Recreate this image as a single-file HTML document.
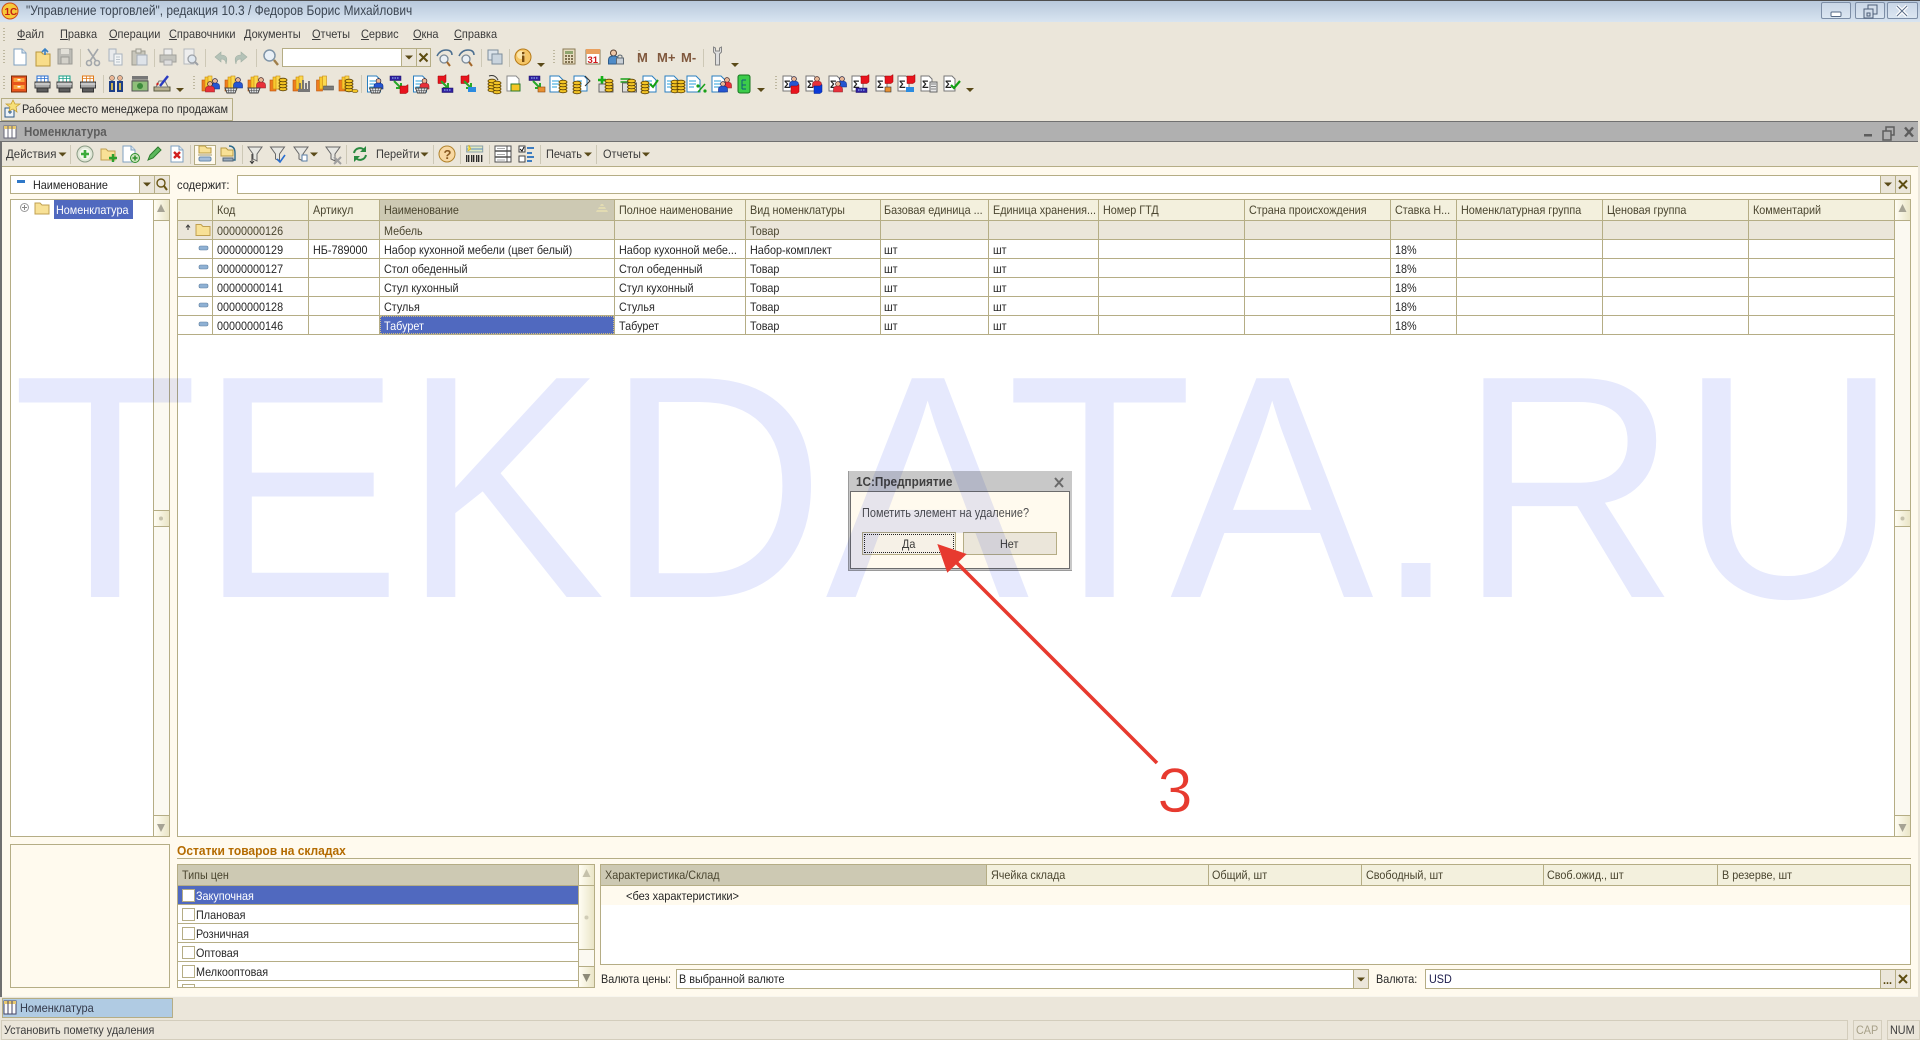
<!DOCTYPE html>
<html lang="ru"><head><meta charset="utf-8"><title>Номенклатура</title>
<style>
html,body{margin:0;padding:0;background:#ebe6da}
#p{position:relative;width:1920px;height:1040px;overflow:hidden;background:#ebe6da;font-family:"Liberation Sans","Noto Sans CJK SC",sans-serif}
#p div{position:absolute;box-sizing:border-box}
.t{white-space:nowrap;font-size:12px;line-height:19px;height:19px;color:#262626;transform:scaleX(.9);transform-origin:0 0;margin-top:1px}
.m{color:#3a3a3a;line-height:20px;height:20px;transform:scaleX(.915);margin-top:0}
.h{color:#4a452f}
.v{background:#b5ad85;width:1px}
.l{background:#b5ad85;height:1px}
.s{background:#cdc8b6;width:1px}
.g{width:2px;background:repeating-linear-gradient(#bdb79f 0 1px,transparent 1px 3px)}
.f{background:#fff;border:1px solid #b5ad85}
.b{background:#ebe6da;border:1px solid #b5ad85}
.sb{background:#fbf9f1;border:1px solid #b5ad85}
.th{background:linear-gradient(90deg,#fffdf3,#eae5c7);border:1px solid #b5ad85}
u{text-decoration:underline}
svg{position:absolute;left:0;top:0}
</style></head><body><div id="p">

<!-- title bar -->
<div style="left:0;top:0;width:1920px;height:1px;background:#4d4d4d"></div>
<div style="left:0;top:1px;width:1920px;height:21px;background:linear-gradient(#b8c8db,#d8e4f0)"></div>
<div class="t" style="left:26px;top:0;margin-top:0;font-size:14px;line-height:21px;height:21px;color:#3c4652;transform:scaleX(.852)">"Управление торговлей", редакция 10.3 / Федоров Борис Михайлович</div>
<div style="left:1821px;top:2px;width:30px;height:17px;border:1px solid #7d8ea6;border-radius:2px;background:linear-gradient(#c9d6e6,#dbe6f1)"></div>
<div style="left:1855px;top:2px;width:30px;height:17px;border:1px solid #7d8ea6;border-radius:2px;background:linear-gradient(#c9d6e6,#dbe6f1)"></div>
<div style="left:1887px;top:2px;width:31px;height:17px;border:1px solid #7d8ea6;border-radius:2px;background:linear-gradient(#c9d6e6,#dbe6f1)"></div>

<!-- menu -->
<div class="g" style="left:3px;top:28px;height:13px"></div>
<div class="t m" style="left:17px;top:24px"><u>Ф</u>айл</div>
<div class="t m" style="left:60px;top:24px"><u>П</u>равка</div>
<div class="t m" style="left:109px;top:24px"><u>О</u>перации</div>
<div class="t m" style="left:168.5px;top:24px"><u>С</u>правочники</div>
<div class="t m" style="left:244px;top:24px"><u>Д</u>окументы</div>
<div class="t m" style="left:312px;top:24px"><u>О</u>тчеты</div>
<div class="t m" style="left:361px;top:24px"><u>С</u>ервис</div>
<div class="t m" style="left:412.5px;top:24px"><u>О</u>кна</div>
<div class="t m" style="left:453.5px;top:24px"><u>С</u>правка</div>

<!-- toolbar 1 -->
<div class="g" style="left:3px;top:50px;height:15px"></div>
<div class="s" style="left:80px;top:49px;height:18px"></div>
<div class="s" style="left:154px;top:49px;height:18px"></div>
<div class="s" style="left:205px;top:49px;height:18px"></div>
<div class="s" style="left:256px;top:49px;height:18px"></div>
<div class="s" style="left:481px;top:49px;height:18px"></div>
<div class="s" style="left:509px;top:49px;height:18px"></div>
<div class="g" style="left:553px;top:50px;height:15px"></div>
<div class="g" style="left:638px;top:50px;height:15px"></div>
<div class="s" style="left:703px;top:49px;height:18px"></div>
<div class="f" style="left:282px;top:48px;width:120px;height:19px"></div>
<div class="b" style="left:401px;top:48px;width:16px;height:19px"></div>
<div class="b" style="left:416px;top:48px;width:15px;height:19px"></div>

<!-- toolbar 2 -->
<div class="g" style="left:3px;top:76px;height:15px"></div>
<div class="s" style="left:103px;top:75px;height:18px"></div>
<div class="g" style="left:193px;top:76px;height:15px"></div>
<div class="s" style="left:361px;top:75px;height:18px"></div>
<div class="g" style="left:775px;top:76px;height:15px"></div>

<!-- work-place tab -->
<div style="left:1px;top:98px;width:232px;height:23px;background:#ebe6da;border:1px solid #b5ad85"></div>
<div class="t m" style="left:22px;top:99px;color:#2c2c2c;font-size:12.3px;transform:scaleX(.89)">Рабочее место менеджера по продажам</div>

<!-- panel -->
<div style="left:0;top:121px;width:1918px;height:876px;background:#fffaee"></div>
<div style="left:0;top:121px;width:2px;height:876px;background:#707070"></div>
<div style="left:0;top:121px;width:1918px;height:1px;background:#707070"></div>
<div style="left:0;top:122px;width:1918px;height:19px;background:#b0b0b0"></div>
<div style="left:0;top:141px;width:1918px;height:1px;background:#707070"></div>
<div style="left:2px;top:142px;width:1916px;height:24px;background:#ebe6da"></div>
<div class="l" style="left:2px;top:166px;width:1916px"></div>
<div style="left:2px;top:996px;width:1916px;height:1px;background:#f8f6ee"></div>
<div class="t" style="left:23.5px;top:122px;margin-top:0;font-size:13px;font-weight:bold;color:#5d5d5d;transform:scaleX(.89)">Номенклатура</div>

<!-- panel toolbar -->
<div class="t m" style="left:6px;top:144px;transform:scaleX(.96)">Действия</div>
<div class="t m" style="left:375.5px;top:144px">Перейти</div>
<div class="t m" style="left:546px;top:144px">Печать</div>
<div class="t m" style="left:602.5px;top:144px">Отчеты</div>
<div class="s" style="left:70px;top:145px;height:19px"></div>
<div class="s" style="left:190px;top:145px;height:19px"></div>
<div class="s" style="left:241.5px;top:145px;height:19px"></div>
<div class="s" style="left:346px;top:145px;height:19px"></div>
<div class="s" style="left:433px;top:145px;height:19px"></div>
<div class="s" style="left:460px;top:145px;height:19px"></div>
<div class="s" style="left:488.5px;top:145px;height:19px"></div>
<div class="s" style="left:540px;top:145px;height:19px"></div>
<div class="s" style="left:596px;top:145px;height:19px"></div>
<div style="left:194px;top:145px;width:22px;height:20px;background:#fffaee;border:1px solid #b5ad85"></div>

<!-- filter row -->
<div class="f" style="left:10px;top:175px;width:130px;height:19px"></div>
<div class="b" style="left:139px;top:175px;width:16px;height:19px"></div>
<div class="b" style="left:154px;top:175px;width:16px;height:19px"></div>
<div class="t" style="left:33px;top:175px">Наименование</div>
<div style="left:17px;top:180px;width:8px;height:3px;background:#2f78c8"></div>
<div class="t" style="left:176.5px;top:175px;transform:scaleX(.93)">содержит:</div>
<div class="f" style="left:236.5px;top:175px;width:1644px;height:19px"></div>
<div class="b" style="left:1880px;top:175px;width:16px;height:19px"></div>
<div class="b" style="left:1895px;top:175px;width:16px;height:19px"></div>

<!-- tree -->
<div style="left:10px;top:199px;width:160px;height:638px;background:#fff;border:1px solid #b5ad85"></div>
<div class="sb" style="left:153px;top:199px;width:17px;height:638px"></div>
<div class="th" style="left:153px;top:199px;width:17px;height:22px"></div>
<div class="th" style="left:153px;top:510px;width:17px;height:17px"></div>
<div class="th" style="left:153px;top:815px;width:17px;height:22px"></div>
<div style="left:54px;top:200px;width:79px;height:19px;background:#5069bf"></div>
<div class="t" style="left:56px;top:200px;color:#fff">Номенклатура</div>

<!-- main grid -->
<div style="left:177px;top:199px;width:1734px;height:638px;background:#fff;border:1px solid #b5ad85"></div>
<div style="left:178px;top:200px;width:1716px;height:20px;background:#f3f0dd"></div>
<div style="left:380px;top:200px;width:234px;height:20px;background:#cdc9b3"></div>
<div style="left:178px;top:221px;width:1716px;height:18px;background:#ebe6da"></div>
<div class="l" style="left:178px;top:220px;width:1716px"></div>
<div class="l" style="left:178px;top:239px;width:1716px"></div>
<div class="l" style="left:178px;top:258px;width:1716px"></div>
<div class="l" style="left:178px;top:277px;width:1716px"></div>
<div class="l" style="left:178px;top:296px;width:1716px"></div>
<div class="l" style="left:178px;top:315px;width:1716px"></div>
<div class="l" style="left:178px;top:334px;width:1716px"></div>
<div class="v" style="left:212px;top:200px;height:134px"></div>
<div class="v" style="left:308px;top:200px;height:134px"></div>
<div class="v" style="left:379px;top:200px;height:134px"></div>
<div class="v" style="left:614px;top:200px;height:134px"></div>
<div class="v" style="left:745px;top:200px;height:134px"></div>
<div class="v" style="left:880px;top:200px;height:134px"></div>
<div class="v" style="left:988px;top:200px;height:134px"></div>
<div class="v" style="left:1098px;top:200px;height:134px"></div>
<div class="v" style="left:1244px;top:200px;height:134px"></div>
<div class="v" style="left:1390px;top:200px;height:134px"></div>
<div class="v" style="left:1456px;top:200px;height:134px"></div>
<div class="v" style="left:1602px;top:200px;height:134px"></div>
<div class="v" style="left:1748px;top:200px;height:134px"></div>
<div class="sb" style="left:1894px;top:199px;width:17px;height:638px"></div>
<div class="th" style="left:1894px;top:199px;width:17px;height:22px"></div>
<div class="th" style="left:1894px;top:510px;width:17px;height:17px"></div>
<div class="th" style="left:1894px;top:815px;width:17px;height:22px"></div>
<div style="left:380px;top:316px;width:234px;height:18px;background:#5069bf;outline:1px dotted #c9b98a;outline-offset:-1px"></div>

<div class="t h" style="left:217px;top:200px">Код</div>
<div class="t h" style="left:312.5px;top:200px">Артикул</div>
<div class="t h" style="left:384px;top:200px">Наименование</div>
<div class="t h" style="left:619px;top:200px">Полное наименование</div>
<div class="t h" style="left:750px;top:200px">Вид номенклатуры</div>
<div class="t h" style="left:884px;top:200px">Базовая единица ...</div>
<div class="t h" style="left:993px;top:200px">Единица хранения...</div>
<div class="t h" style="left:1103px;top:200px">Номер ГТД</div>
<div class="t h" style="left:1248.5px;top:200px">Страна происхождения</div>
<div class="t h" style="left:1394.5px;top:200px">Ставка Н...</div>
<div class="t h" style="left:1460.5px;top:200px">Номенклатурная группа</div>
<div class="t h" style="left:1607px;top:200px">Ценовая группа</div>
<div class="t h" style="left:1753px;top:200px">Комментарий</div>

<div class="t h" style="left:217px;top:221px">00000000126</div>
<div class="t h" style="left:384px;top:221px">Мебель</div>
<div class="t h" style="left:750px;top:221px">Товар</div>

<div class="t" style="left:217px;top:240px">00000000129</div>
<div class="t" style="left:312.5px;top:240px">НБ-789000</div>
<div class="t" style="left:384px;top:240px">Набор кухонной мебели (цвет белый)</div>
<div class="t" style="left:619px;top:240px">Набор кухонной мебе...</div>
<div class="t" style="left:750px;top:240px">Набор-комплект</div>
<div class="t" style="left:884px;top:240px">шт</div><div class="t" style="left:993px;top:240px">шт</div><div class="t" style="left:1395px;top:240px">18%</div>

<div class="t" style="left:217px;top:259px">00000000127</div>
<div class="t" style="left:384px;top:259px">Стол обеденный</div>
<div class="t" style="left:619px;top:259px">Стол обеденный</div>
<div class="t" style="left:750px;top:259px">Товар</div>
<div class="t" style="left:884px;top:259px">шт</div><div class="t" style="left:993px;top:259px">шт</div><div class="t" style="left:1395px;top:259px">18%</div>

<div class="t" style="left:217px;top:278px">00000000141</div>
<div class="t" style="left:384px;top:278px">Стул кухонный</div>
<div class="t" style="left:619px;top:278px">Стул кухонный</div>
<div class="t" style="left:750px;top:278px">Товар</div>
<div class="t" style="left:884px;top:278px">шт</div><div class="t" style="left:993px;top:278px">шт</div><div class="t" style="left:1395px;top:278px">18%</div>

<div class="t" style="left:217px;top:297px">00000000128</div>
<div class="t" style="left:384px;top:297px">Стулья</div>
<div class="t" style="left:619px;top:297px">Стулья</div>
<div class="t" style="left:750px;top:297px">Товар</div>
<div class="t" style="left:884px;top:297px">шт</div><div class="t" style="left:993px;top:297px">шт</div><div class="t" style="left:1395px;top:297px">18%</div>

<div class="t" style="left:217px;top:316px">00000000146</div>
<div class="t" style="left:384px;top:316px;color:#fff">Табурет</div>
<div class="t" style="left:619px;top:316px">Табурет</div>
<div class="t" style="left:750px;top:316px">Товар</div>
<div class="t" style="left:884px;top:316px">шт</div><div class="t" style="left:993px;top:316px">шт</div><div class="t" style="left:1395px;top:316px">18%</div>

<!-- lower section -->
<div style="left:10px;top:844px;width:160px;height:144px;background:#fffaee;border:1px solid #b5ad85"></div>
<div class="t" style="left:176.500px;top:842px;margin-top:0;font-weight:bold;color:#b46b00;font-size:12.5px;transform:scaleX(.96)">Остатки товаров на складах</div>
<div class="l" style="left:177px;top:858px;width:1734px"></div>

<!-- price types -->
<div style="left:177px;top:864px;width:418px;height:124px;background:#fff;border:1px solid #b5ad85;overflow:hidden"></div>
<div style="left:178px;top:865px;width:400px;height:20px;background:#cdc9b3"></div>
<div style="left:178px;top:886px;width:400px;height:18px;background:#5069bf"></div>
<div class="l" style="left:178px;top:885px;width:400px"></div>
<div class="l" style="left:178px;top:904px;width:400px"></div>
<div class="l" style="left:178px;top:923px;width:400px"></div>
<div class="l" style="left:178px;top:942px;width:400px"></div>
<div class="l" style="left:178px;top:961px;width:400px"></div>
<div class="l" style="left:178px;top:980px;width:400px"></div>
<div class="sb" style="left:578px;top:864px;width:17px;height:124px"></div>
<div class="th" style="left:578px;top:864px;width:17px;height:22px"></div>
<div class="th" style="left:578px;top:885px;width:17px;height:65px"></div>
<div class="th" style="left:578px;top:966px;width:17px;height:22px"></div>
<div class="t h" style="left:182px;top:865px">Типы цен</div>
<div style="left:182px;top:889px;width:13px;height:13px;background:#fff;border:1px solid #b5ad85"></div>
<div style="left:182px;top:908px;width:13px;height:13px;background:#fff;border:1px solid #b5ad85"></div>
<div style="left:182px;top:927px;width:13px;height:13px;background:#fff;border:1px solid #b5ad85"></div>
<div style="left:182px;top:946px;width:13px;height:13px;background:#fff;border:1px solid #b5ad85"></div>
<div style="left:182px;top:965px;width:13px;height:13px;background:#fff;border:1px solid #b5ad85"></div>
<div style="left:182px;top:984px;width:13px;height:3px;background:#fff;border:1px solid #b5ad85;border-bottom:0"></div>
<div class="t" style="left:196px;top:886px;color:#fff">Закупочная</div>
<div class="t" style="left:196px;top:905px">Плановая</div>
<div class="t" style="left:196px;top:924px">Розничная</div>
<div class="t" style="left:196px;top:943px">Оптовая</div>
<div class="t" style="left:196px;top:962px">Мелкооптовая</div>

<!-- stock table -->
<div style="left:600px;top:864px;width:1311px;height:101px;background:#fff;border:1px solid #b5ad85"></div>
<div style="left:601px;top:865px;width:1309px;height:20px;background:#f3f0dd"></div>
<div style="left:601px;top:865px;width:386px;height:20px;background:#cdc9b3"></div>
<div class="l" style="left:601px;top:885px;width:1309px"></div>
<div style="left:601px;top:886px;width:1309px;height:19px;background:#fffaee"></div>
<div class="v" style="left:986px;top:865px;height:20px"></div>
<div class="v" style="left:1208px;top:865px;height:20px"></div>
<div class="v" style="left:1361px;top:865px;height:20px"></div>
<div class="v" style="left:1543px;top:865px;height:20px"></div>
<div class="v" style="left:1717px;top:865px;height:20px"></div>
<div class="t h" style="left:605px;top:865px">Характеристика/Склад</div>
<div class="t h" style="left:991px;top:865px">Ячейка склада</div>
<div class="t h" style="left:1212px;top:865px">Общий, шт</div>
<div class="t h" style="left:1365.5px;top:865px">Свободный, шт</div>
<div class="t h" style="left:1547px;top:865px">Своб.ожид., шт</div>
<div class="t h" style="left:1722px;top:865px">В резерве, шт</div>
<div class="t" style="left:626px;top:886px;transform:scaleX(.92)">&lt;без характеристики&gt;</div>

<div class="t" style="left:601px;top:969px">Валюта цены:</div>
<div class="f" style="left:676px;top:969px;width:678px;height:20px"></div>
<div class="b" style="left:1353px;top:969px;width:16px;height:20px"></div>
<div class="t" style="left:679px;top:969px">В выбранной валюте</div>
<div class="t" style="left:1376px;top:969px">Валюта:</div>
<div class="f" style="left:1425px;top:969px;width:456px;height:20px"></div>
<div class="b" style="left:1880px;top:969px;width:16px;height:20px"></div>
<div class="b" style="left:1895px;top:969px;width:16px;height:20px"></div>
<div class="t" style="left:1429px;top:969px;color:#1a1a4a">USD</div>
<div class="t" style="left:1883px;top:970px;font-weight:bold;color:#5a4a10">...</div>

<!-- dialog -->
<div style="left:848px;top:471px;width:224px;height:100px;background:#c8c8c8;border-left:1px solid #9a9a9a;border-bottom:1px solid #9a9a9a"></div>
<div style="left:850px;top:491px;width:220px;height:78px;background:#fffaee;border:1px solid #6c6c6c"></div>
<div class="t" style="left:856px;top:472px;font-weight:bold;color:#404040;font-size:12.5px;transform:scaleX(.94)">1С:Предприятие</div>
<div class="t" style="left:862px;top:503px;color:#505050;font-size:12.5px;transform:scaleX(.875)">Пометить элемент на удаление?</div>
<div style="left:862px;top:532px;width:94px;height:23px;background:#f6f1e7;border:1px solid #b5ad85"></div>
<div style="left:864px;top:534px;width:90px;height:19px;border:1px dotted #222"></div>
<div style="left:963px;top:532px;width:94px;height:23px;background:#ebe6da;border:1px solid #b5ad85"></div>
<div class="t" style="left:901.500px;top:534px;color:#3a3a3a">Да</div>
<div class="t" style="left:1000px;top:534px;color:#3a3a3a">Нет</div>

<!-- taskbar & status -->
<div style="left:2px;top:998px;width:171px;height:20px;background:#b0cbe3;border:1px solid #b5ad85"></div>
<div class="t m" style="left:20px;top:998px;color:#33394a">Номенклатура</div>
<div style="left:1px;top:1020px;width:1847px;height:20px;border:1px solid #d3cdbc"></div>
<div class="t" style="left:4px;top:1021px;margin-top:0;color:#3d3d3d">Установить пометку удаления</div>
<div style="left:1853px;top:1020px;width:29px;height:20px;border:1px solid #d3cdbc"></div>
<div style="left:1887px;top:1020px;width:33px;height:20px;border:1px solid #d3cdbc"></div>
<div class="t" style="left:1856px;top:1021px;margin-top:0;color:#a7a088">CAP</div>
<div class="t" style="left:1890px;top:1021px;margin-top:0;color:#3d3d3d">NUM</div>

<!-- ICONS -->
<svg width="1920" height="1040" viewBox="0 0 1920 1040" font-family="Liberation Sans, sans-serif">
<defs>
<path id="ar" d="M-4-2h8l-4 4z" fill="#5a4a18"/>
<path id="xx" d="M-4-4 4 4M4-4-4 4" stroke="#5d4c10" stroke-width="2" fill="none"/>
<g id="dash"><rect x="-4" y="-2" width="9" height="4" rx="1.5" fill="#8fb1d4" stroke="#5f7f9f" stroke-width=".6"/></g>
<g id="folder"><path d="M-7-5h5l2 2h7v9h-14z" fill="#f8e196" stroke="#c0a050"/></g>
<g id="doc"><path d="M-6-8h8l4 4v12h-12z" fill="#fff" stroke="#7fa0c0"/><path d="M2-8v4h4" fill="#dbe6f0" stroke="#7fa0c0"/></g>
<g id="docB"><path d="M-8-8h9l4 4v12h-13z" fill="#fff" stroke="#2a7fc0"/><path d="M-6-3h7M-6 0h7M-6 3h5" stroke="#2a9fd8"/></g>
<g id="fs"><rect x="-8" y="-4" width="6" height="11" fill="#ef7d1e" stroke="#b8540a" stroke-width=".6"/><rect x="-5" y="-7" width="5" height="12" fill="#f9c92e" stroke="#c98a12" stroke-width=".6"/><rect x="-2" y="-8" width="4" height="13" fill="#fbd950" stroke="#c98a12" stroke-width=".6"/></g>
<g id="pR"><circle cy="-3" r="2.4" fill="#eab796" stroke="#402020" stroke-width=".7"/><path d="M-4.5 5V2q0-3 4.500-3t4.500 3V5z" fill="#e8303a" stroke="#902028" stroke-width=".6"/></g>
<g id="pB"><circle cy="-3" r="2.4" fill="#eab796" stroke="#202040" stroke-width=".7"/><path d="M-4.500 5V2q0-3 4.500-3t4.500 3V5z" fill="#2456d2" stroke="#102a80" stroke-width=".6"/></g>
<g id="bk"><path d="M-6-2H6L4 3H-4z" fill="#dfe3e6" stroke="#444"/><path d="M-3-2l1 5M0-2V3M3-2 2 3M-5 .5H5" stroke="#444" stroke-width=".6"/></g>
<g id="cn"><g fill="#f4c525" stroke="#5e4306" stroke-width=".9"><ellipse cy="4" rx="4" ry="1.800"/><ellipse cy="1" rx="4" ry="1.800"/><ellipse cy="-2" rx="4" ry="1.800"/><ellipse cy="-5" rx="4" ry="1.800"/></g></g>
<g id="rc"><path d="M-4-3h6l2-1.500V3l-2 1.500h-6z" fill="#e8141e" stroke="#900" stroke-width=".5"/></g>
<g id="bc"><path d="M-4-3h6l2-1.500V3l-2 1.500h-6z" fill="#0a3ad8" stroke="#00208a" stroke-width=".5"/></g>
<g id="bbar"><rect x="-6" y="-2" width="11" height="4.500" fill="#3020a0" stroke="#180c60" stroke-width=".5"/><path d="M-4 0h7" stroke="#9ed0ff" stroke-dasharray="1.500 1"/></g>
<g id="grn"><path d="M-4-4 3 3M3-2V3H-2" fill="none" stroke="#28a828" stroke-width="2"/></g>
<g id="prn"><path d="M-6-8H5v6H-6z" fill="#fff" stroke="currentColor"/><path d="M-6-5.500H5M-2-8v6M1.500-8v6" stroke="currentColor" stroke-width=".8"/><path d="M-8-2H7v6H-8z" fill="#a9a9a9" stroke="#3e3e3e"/><path d="M-6 4H5v4H-6z" fill="#5d5d5d" stroke="#333"/><path d="M-8 0H7" stroke="#e8e8e8"/></g>
<g id="sig"><path d="M-8-8h8l3 3V7H-8z" fill="#fff" stroke="#777"/><text x="-7" y="4" font-size="11" fill="#222" font-weight="bold">Σ</text></g>
<g id="gfil"><path d="M-7-7H7L2 0V7L-2 5V0z" fill="#e7e7e2" stroke="#676767"/></g>
</defs>

<!-- title logo -->
<circle cx="10" cy="11" r="8" fill="#f6c93a" stroke="#d24a16"/>
<text x="4.500" y="15" font-size="10" font-weight="bold" fill="#c41e14">1С</text>
<!-- window buttons -->
<rect x="1831" y="12" width="10" height="4.500" rx="1" fill="#fff" stroke="#566a86"/>
<g fill="#d2ddea" stroke="#4d5f78"><rect x="1868" y="5" width="9" height="9"/><rect x="1864" y="9" width="9" height="9"/></g><rect x="1867" y="13" width="3" height="3" fill="none" stroke="#4d5f78"/>
<path d="M1897 6 1907 16M1907 6 1897 16" stroke="#fff" stroke-width="3.500"/><path d="M1897 6 1907 16M1907 6 1897 16" stroke="#5a6d88" stroke-width="1"/>
<!-- panel buttons -->
<rect x="1864" y="134" width="8" height="2.500" fill="#5d5d5d"/>
<g fill="#b0b0b0" stroke="#5d5d5d" stroke-width="1.500"><rect x="1886" y="127" width="8" height="8"/><rect x="1883" y="131" width="8" height="9"/></g>
<path d="M1905 127.500 1913 136.500M1913 127.500 1905 136.500" stroke="#5d5d5d" stroke-width="2.400"/>

<!-- toolbar 1 icons -->
<use href="#doc" x="20" y="57"/>
<g transform="translate(43 58)"><path d="M-7-6h5l2 2h7V8h-14z" fill="#f8dd8a" stroke="#b8963e"/><path d="M2-3V-9M-1-6 2-9 5-6" stroke="#3b82c4" stroke-width="1.600" fill="none"/></g>
<g transform="translate(65 57)"><rect x="-7" y="-8" width="14" height="15" fill="#bdbcb6" stroke="#9b9b95"/><rect x="-4" y="-8" width="8" height="5" fill="#e2e0d8"/><rect x="-4" y="0" width="8" height="7" fill="#d4d2ca" stroke="#9b9b95"/></g>
<g transform="translate(93 57)" fill="none" stroke="#a3a7ab" stroke-width="1.600"><path d="M-5-8 3 4M5-8-3 4"/><circle cx="-4" cy="6" r="2.500"/><circle cx="4" cy="6" r="2.500"/></g>
<g transform="translate(116 57)" fill="#e8eaec" stroke="#a9b3bd"><path d="M-7-8h7v12h-7z"/><path d="M-2-3H6V8H-2z" fill="#f2f4f5"/><path d="M0 0H4M0 2.500H4M0 5H4" stroke-width=".7"/></g>
<g transform="translate(139 57)"><path d="M-7-6H6V8H-7z" fill="#c9c7bc" stroke="#9c9b90"/><rect x="-3" y="-8" width="5" height="4" fill="#e2e0d8" stroke="#9c9b90"/><path d="M-2-2H8V8H-2z" fill="#dee3e9" stroke="#a5aeb8"/></g>
<g transform="translate(168 57)"><path d="M-4-8H4V-2H-4z" fill="#eee" stroke="#aaa"/><path d="M-8-2H8V5H-8z" fill="#c3c3bd" stroke="#a0a09a"/><path d="M-4 3H4V8H-4z" fill="#ddd" stroke="#aaa"/></g>
<g transform="translate(190 57)"><path d="M-6-8H4V7H-6z" fill="#eee" stroke="#b5b9be"/><circle cx="2" cy="2" r="4" fill="#dfe7ef" stroke="#9da1a6" stroke-width="1.300"/><path d="M5 5 8 8" stroke="#9da1a6" stroke-width="2"/></g>
<path d="M221 52 215 57 221 62V59Q226 59 226 64 229 55 221 55z" fill="#b4c2b7" stroke="#a0afa3" stroke-width=".6"/>
<path d="M241 52 247 57 241 62V59Q236 59 236 64 233 55 241 55z" fill="#b4c2b7" stroke="#a0afa3" stroke-width=".6"/>
<g transform="translate(271 57)"><circle cx="-1.500" cy="-1.500" r="5.500" fill="#e9f0f7" stroke="#8095a8" stroke-width="1.500"/><path d="M3 3 7 8" stroke="#a07f4a" stroke-width="2.400"/></g>
<use href="#ar" x="409" y="57.500"/><use href="#xx" x="423.500" y="57.500"/>
<g transform="translate(444 58)"><circle cy="1" r="4" fill="#eaf0f5" stroke="#7b8a98" stroke-width="1.300"/><path d="M3 4 6 8" stroke="#a3672a" stroke-width="2"/><path d="M-7-2Q-4-8 2-8T8-3" fill="none" stroke="#4c6f90" stroke-width="1.500"/></g>
<g transform="translate(466 58)"><circle cy="1" r="4" fill="#eaf0f5" stroke="#7b8a98" stroke-width="1.300"/><path d="M3 4 6 8" stroke="#a3672a" stroke-width="2"/><path d="M-7-2Q-4-8 2-8T8-3" fill="none" stroke="#4c6f90" stroke-width="1.500"/></g>
<g transform="translate(495 57)" fill="#dbe3ea" stroke="#7e8e9c"><rect x="-7" y="-7" width="10" height="10"/><rect x="-3" y="-3" width="10" height="10" fill="#c9d4de"/></g>
<g transform="translate(523 57)"><circle r="8" fill="#f5c667" stroke="#b67a17"/><circle cx="-2" cy="-2" r="4" fill="#fbe6ad"/><rect x="-1" y="-1.500" width="2.400" height="6.500" fill="#7a4d10"/><rect x="-1" y="-5" width="2.400" height="2.300" fill="#7a4d10"/></g>
<use href="#ar" x="541" y="65"/>
<g transform="translate(569 57)"><rect x="-6" y="-8" width="12" height="15" fill="#e6dcc0" stroke="#8a7a55"/><rect x="-4" y="-6" width="8" height="3" fill="#8fa56f"/><path d="M-4-1h2M-1-1h2M2-1h2M-4 2h2M-1 2h2M2 2h2M-4 5h2M-1 5h2M2 5h2" stroke="#5d4c2a" stroke-width="1.400"/></g>
<g transform="translate(593 57)"><rect x="-7" y="-7" width="14" height="14" fill="#fff" stroke="#8a7a55"/><rect x="-7" y="-8" width="14" height="5" fill="#e9a05e"/><text x="-5.500" y="6" font-size="9.500" font-weight="bold" fill="#d01a1a">31</text></g>
<g transform="translate(615.500 57)"><circle cx="-2" cy="-4" r="3" fill="#f0c8a8" stroke="#5a4030"/><path d="M-7 7V3Q-7-1-2-1T2 2V7z" fill="#4f8cc8" stroke="#2d5b8a"/><rect x="1" y="1" width="7" height="6" fill="#c8cfd6" stroke="#5f6a74"/><path d="M2.500 1V-1Q4.500-3 6.500-1V1" fill="none" stroke="#5f6a74"/></g>
<text x="637" y="62" font-size="13" font-weight="bold" fill="#80583d">M</text>
<text x="657" y="62" font-size="13" font-weight="bold" fill="#80583d">M+</text>
<text x="681" y="62" font-size="13" font-weight="bold" fill="#80583d">M-</text>
<g transform="translate(717.500 56)"><path d="M-4-9-4-4-2-2V9H2V-2L4-4V-9L2-8V-5H-2V-8z" fill="#dedede" stroke="#858585"/></g>
<use href="#ar" x="735" y="65"/>

<!-- toolbar 2 icons -->
<g transform="translate(0 1)">
<g transform="translate(19.500 83)"><rect x="-8" y="-8" width="15" height="16" fill="#e8541c" stroke="#7b2c0a"/><rect x="-6" y="-6" width="11" height="4" fill="#f9a23c"/><rect x="-6" y="1" width="11" height="4" fill="#f9a23c"/><rect x="-2" y="-5" width="3" height="1.500" fill="#fff"/><rect x="-2" y="2" width="3" height="1.500" fill="#fff"/></g>
<use href="#prn" x="43" y="83" style="color:#2a6fd0"/><use href="#prn" x="65" y="83" style="color:#18a088"/><use href="#prn" x="88.500" y="83" style="color:#e07a18"/>
<g transform="translate(116 83)"><circle cx="-4" cy="-6" r="2.500" fill="#eab796" stroke="#333" stroke-width=".5"/><circle cx="4" cy="-6" r="2.500" fill="#eab796" stroke="#333" stroke-width=".5"/><path d="M-7 8V-3h6V8zM1 8V-3H7V8z" fill="#1c3f88"/><path d="M-4 6V-1M4 6V-1" stroke="#f8d040" stroke-width="1.600"/></g>
<g transform="translate(140 83)"><rect x="-8" y="-8" width="16" height="5" fill="#9a9a94"/><rect x="-8" y="-3" width="16" height="10" fill="#8fbf7a" stroke="#555"/><circle cy="2" r="3" fill="#3b8a3b"/><path d="M-8-8h16v3h-16z" fill="#777"/></g>
<g transform="translate(162 83)"><path d="M-8 3H8V7H-8z" fill="#b7b08f" stroke="#5a5a40"/><path d="M-6 3-3-3H3L6 3z" fill="#f0ecd6" stroke="#777"/><path d="M-2 2 6-8" stroke="#2a3bc0" stroke-width="2.400"/><path d="M-5 1-4-1" stroke="#d02020" stroke-width="2"/></g>

<g transform="translate(210 83)"><use href="#fs"/><use href="#pB" x="5" y="0"/><use href="#pR" x="0" y="3"/></g>
<g transform="translate(233 83)"><use href="#fs"/><use href="#pB" x="5" y="-1"/><use href="#bk" x="-2" y="6"/></g>
<g transform="translate(256 83)"><use href="#fs"/><use href="#pR" x="5" y="-1"/><use href="#bk" x="-2" y="6"/></g>
<g transform="translate(278 83)"><use href="#fs"/><use href="#cn" x="5" y="1"/></g>
<g transform="translate(301 83)"><use href="#fs"/><path d="M-1 8V-1M2 8V-4M5 8V-1M8 8V-3" stroke="#6d6d6d" stroke-width="1.800"/><rect x="-3" y="5" width="12" height="3" fill="#777"/></g>
<g transform="translate(324.500 83)"><use href="#fs"/><rect x="-1" y="2" width="10" height="4" fill="#7b7b7b" stroke="#444" stroke-width=".5"/></g>
<g transform="translate(347 83)"><use href="#fs"/><use href="#cn" x="2" y="2"/><ellipse cx="8" cy="7" rx="3" ry="1.500" fill="#f4c525" stroke="#5e4306" stroke-width=".6"/></g>

<g transform="translate(375.500 83)"><use href="#docB"/><use href="#pB" x="3" y="0"/><use href="#bk" x="0" y="6"/></g>
<g transform="translate(398 83)"><use href="#bbar" x="-2" y="-6"/><use href="#grn" x="0" y="1"/><use href="#rc" x="6" y="5"/></g>
<g transform="translate(421.500 83)"><use href="#docB"/><use href="#pR" x="3" y="0"/><use href="#bk" x="0" y="6"/></g>
<g transform="translate(445 83)"><use href="#rc" x="-3" y="-5"/><use href="#grn" x="0" y="1"/><use href="#bbar" x="3" y="6"/></g>
<g transform="translate(468 83)"><use href="#rc" x="-3" y="-5"/><use href="#grn" x="0" y="1"/><rect x="0" y="3" width="8" height="5" fill="#2b8be0"/></g>
<g transform="translate(492 83)"><use href="#cn" x="0" y="2"/><use href="#cn" x="5" y="4"/><path d="M-3-8Q3-10 6-4" fill="none" stroke="#333"/></g>
<g transform="translate(514 83)"><path d="M-7-8H2L5-5V7H-7z" fill="#fff" stroke="#8a8a8a"/><rect x="-3" y="0" width="9" height="7" fill="#f4c525" stroke="#2a7a2a"/></g>
<g transform="translate(537 83)"><use href="#bbar" x="-2" y="-6"/><use href="#grn" x="0" y="1"/><rect x="1" y="3" width="7" height="5" fill="#e89030" stroke="#8a4a10" stroke-width=".6"/></g>
<g transform="translate(559 83)"><use href="#docB" x="-1"/><use href="#cn" x="4" y="3"/></g>
<g transform="translate(582 83)"><path d="M-8-8H2L5-5V7H-8z" fill="#fff" stroke="#2a7fc0"/><path d="M-5-3H0M-5 0H0" stroke="#2a9fd8"/><use href="#cn" x="-5" y="4"/><path d="M3-8 8-3 3 2" fill="none" stroke="#333"/></g>
<g transform="translate(605 83)"><path d="M-7-4H1M-3-8V0" stroke="#18b018" stroke-width="2.600"/><rect x="-6" y="0" width="14" height="8" fill="#ddd" stroke="#666"/><use href="#cn" x="4" y="2"/></g>
<g transform="translate(628.500 83)"><path d="M-8-5H2M-8-2H2" stroke="#18a018" stroke-width="1.600"/><rect x="-6" y="-1" width="14" height="9" fill="#ddd" stroke="#666"/><use href="#cn" x="3" y="2"/></g>
<g transform="translate(650 83)"><use href="#docB" x="1"/><use href="#cn" x="-5" y="4"/><path d="M0 0 3 3 8-4" fill="none" stroke="#12a012" stroke-width="2"/></g>
<g transform="translate(675 83)"><use href="#docB" x="-2"/><use href="#cn" x="0" y="3"/><use href="#cn" x="6" y="3"/></g>
<g transform="translate(697 83)"><use href="#docB" x="-2"/><path d="M1 8 8 0" stroke="#18a018" stroke-width="1.500"/><circle cx="1" cy="2" r="1.600" fill="#18a018"/><circle cx="8" cy="7" r="1.600" fill="#18a018"/></g>
<g transform="translate(722 83)"><use href="#docB" x="-2"/><use href="#pR" x="5" y="-1"/><use href="#pB" x="1" y="3"/></g>
<g transform="translate(744 83)"><rect x="-6" y="-9" width="12" height="18" rx="2" fill="#3ccc4a" stroke="#17751f"/><path d="M-2-4V5M-2-4H2M-2 1H2M-2 5H2" stroke="#0e5c7a" fill="none"/></g>

<g transform="translate(791 83)"><use href="#sig"/><use href="#pB" x="3" y="-2"/><use href="#rc" x="4" y="5"/></g>
<g transform="translate(814 83)"><use href="#sig"/><use href="#pR" x="3" y="-2"/><use href="#bc" x="4" y="5"/></g>
<g transform="translate(837 83)"><use href="#sig"/><use href="#pB" x="5" y="-2"/><use href="#pR" x="1" y="3"/></g>
<g transform="translate(860 83)"><use href="#sig"/><use href="#rc" x="5" y="-5"/><use href="#bbar" x="2" y="6"/></g>
<g transform="translate(884 83)"><use href="#sig"/><use href="#rc" x="5" y="-5"/><rect x="1" y="3" width="6" height="5" fill="#e89030" stroke="#333" stroke-width=".6"/></g>
<g transform="translate(906 83)"><use href="#sig"/><use href="#rc" x="5" y="-5"/><rect x="0" y="3" width="8" height="5" fill="#2b8be0"/></g>
<g transform="translate(929 83)"><use href="#sig"/><path d="M1-2H8V8H1z" fill="#e8e8e8" stroke="#666"/><path d="M2 0H7M2 2.500H7M2 5H7" stroke="#666" stroke-width=".8"/></g>
<g transform="translate(952 83)"><use href="#sig"/><path d="M-1 1 2 4 8-3" fill="none" stroke="#12a012" stroke-width="2.200"/></g>
</g>
<use href="#ar" x="180" y="90"/><use href="#ar" x="761" y="90"/><use href="#ar" x="970" y="90"/>

<!-- tab icon -->
<g transform="translate(12 110)"><rect x="-7" y="-2" width="9" height="9" fill="#eef3f8" stroke="#2c5a88"/><path d="M-4 2H0M-2 0V4" stroke="#2c5a88"/><path d="M1-10 3-6 8-6 4-3 5 2 1-1-3 1-2-3-6-6-1-6z" fill="#f7e07a" stroke="#c39a2a" stroke-width=".7"/></g>

<!-- panel title icon -->
<g transform="translate(4 126)"><rect width="12" height="12" fill="#fdfdfd" stroke="#667"/><rect width="12" height="3" fill="#e8c870"/><path d="M4 0V12M8 0V12" stroke="#667"/></g>

<!-- panel toolbar icons -->
<use href="#ar" x="62.500" y="154.500"/>
<g transform="translate(85 154)"><circle r="8" fill="#dfe6d6" stroke="#8a9b84"/><circle r="5.500" fill="#f4f8ee"/><path d="M-4 0H4M0-4V4" stroke="#3cab3c" stroke-width="2.600"/></g>
<g transform="translate(108 154)"><use href="#folder"/><path d="M1 4H9M5 0V8" stroke="#2ca02c" stroke-width="2.400"/></g>
<g transform="translate(131 154)"><use href="#doc" x="-2"/><circle cx="4" cy="4" r="4.500" fill="#cfe3bf" stroke="#2c902c"/><path d="M1.500 4H6.500M4 1.500V6.500" stroke="#2c902c" stroke-width="1.500"/></g>
<path d="M148 160 150 155 158 147 161 150 153 158z" fill="#5cb85c" stroke="#2d7a2d"/>
<g transform="translate(177 154)"><use href="#doc"/><path d="M-3-2 3 4M3-2-3 4" stroke="#d02020" stroke-width="2.400"/></g>
<g transform="translate(205 155)"><path d="M-6-9H0L2-7H6V-2H-6z" fill="#f8e196" stroke="#b89a44"/><rect x="-6" y="2" width="12" height="4" rx="1.500" fill="#a5bedb" stroke="#6a8cad"/><path d="M-7 0H7" stroke="#a0986e"/></g>
<g transform="translate(228 154)"><path d="M-7-6H-2L0-4H5V2H-7z" fill="#f8e196" stroke="#b89a44"/><path d="M1-8Q7-8 7-1V6H-3" fill="none" stroke="#2d6a8a" stroke-width="1.400"/><rect x="-5" y="4" width="10" height="3" fill="#9ab" stroke="#567"/></g>
<use href="#gfil" x="255" y="154"/><path d="M252 154V163M250 161 252 163.500 254 161" stroke="#333" fill="none"/>
<use href="#gfil" x="277.500" y="154"/><path d="M277 159 280 162 285 155" stroke="#2a6fd0" fill="none" stroke-width="1.600"/>
<use href="#gfil" x="301" y="154"/><rect x="302" y="155" width="5" height="6" fill="#fff" stroke="#5a7ea6"/>
<use href="#ar" x="314" y="154.500"/>
<use href="#gfil" x="333" y="154"/><path d="M334 157 341 164M341 157 334 164" stroke="#a0a0a0" stroke-width="2"/>
<g transform="translate(360 154)" fill="none" stroke="#2a8a40" stroke-width="2"><path d="M-6-1A6 6 0 0 1 5-3"/><path d="M6 1A6 6 0 0 1-5 3"/></g>
<path d="M366 146V152H360zM354 162V156H360z" fill="#2a8a40"/>
<use href="#ar" x="424.500" y="154.500"/>
<g transform="translate(447 154)"><circle r="8" fill="#f8d8a2" stroke="#b0822c"/><text x="-3.500" y="5" font-size="13" font-weight="bold" fill="#8a5a20">?</text></g>
<g transform="translate(474.700 154)"><rect x="-8" y="-8" width="16" height="6" fill="#dfe9c2" stroke="#8aa0a8"/><path d="M-8-5H8" stroke="#5a8abf"/><path d="M-6-9-4-5-7-3" fill="#f5e24a" stroke="#d5b12a"/><path d="M-8 1V8M-6 1V8M-3 1V8M-1 1V8M2 1V8M4 1V8M7 1V8" stroke="#222" stroke-width="1.300"/></g>
<g transform="translate(503 154)"><rect x="-8" y="-8" width="16" height="16" fill="#fff" stroke="#505050"/><path d="M-8-3H8M-8 3H8" stroke="#505050" stroke-width="1.400"/><path d="M4-8V8" stroke="#505050"/><path d="M-6-5.500H2M-6 .5H2M-6 6H2" stroke="#aaa"/></g>
<g transform="translate(526 154)"><rect x="-7" y="-8" width="6" height="6" fill="#fff" stroke="#444"/><path d="M-6-5-4-3-2-7" stroke="#111" fill="none"/><rect x="-7" y="2" width="6" height="6" fill="#fff" stroke="#444"/><path d="M1-6H8M1-1H6M1 3H8M1 7H6" stroke="#3d7cc0" stroke-width="2"/></g>
<use href="#ar" x="588" y="154.500"/><use href="#ar" x="646" y="154.500"/>

<!-- filter -->
<use href="#ar" x="147" y="184.500"/>
<g transform="translate(162 184)" fill="none" stroke="#6a5614"><circle cx="-1" cy="-1" r="4" stroke-width="1.400"/><path d="M2 2 5 6" stroke-width="2"/></g>
<use href="#ar" x="1888" y="184.500"/><use href="#xx" x="1903" y="184.500"/>

<!-- tree & grid icons -->
<circle cx="24.500" cy="207.500" r="4" fill="#fff" stroke="#9a9a9a"/><path d="M22 207.500H27M24.500 205V210" stroke="#888"/>
<use href="#folder" x="42" y="208"/>
<path d="M161 204 165 212H157z" fill="#a6a394"/>
<path d="M161 832 165 824H157z" fill="#a6a394"/>
<path d="M1902.500 204 1906.500 212H1898.500z" fill="#a6a394"/>
<path d="M1902.500 832 1906.500 824H1898.500z" fill="#a6a394"/>
<circle cx="161" cy="518.500" r="2" fill="#c5c1ab"/><circle cx="1902.500" cy="518.500" r="2" fill="#c5c1ab"/>
<path d="M598 209H606L605 207H599zM600 206H604L603 204H601zM596 212H608L607 210H597z" fill="#e2dbb2"/>
<path d="M188 226V230M186 227.500 188 225 190 227.500" stroke="#333" fill="none"/>
<use href="#folder" x="203" y="229.500"/>
<use href="#dash" x="203" y="248"/><use href="#dash" x="203" y="267"/><use href="#dash" x="203" y="286"/><use href="#dash" x="203" y="305"/><use href="#dash" x="203" y="324"/>

<!-- bottom scroll & dropdown -->
<path d="M586.500 869 590.500 877H582.500z" fill="#c5c1ab"/><path d="M586.500 982 590.500 974H582.500z" fill="#8d8a78"/><circle cx="586.500" cy="917.500" r="2" fill="#d0ccb6"/>
<use href="#ar" x="1361" y="979.500"/><use href="#xx" x="1903" y="979"/>

<!-- dialog close -->
<path d="M1055 478 1063 487M1063 478 1055 487" stroke="#6a6a6a" stroke-width="2"/>

<!-- taskbar icon -->
<g transform="translate(4 1001)"><rect width="12" height="13" fill="#fdfdfd" stroke="#446"/><rect width="12" height="3" fill="#e8c870"/><path d="M4 0V13M8 0V13" stroke="#446"/></g>
</svg>

<!-- watermark -->
<svg width="1920" height="1040" viewBox="0 0 1920 1040" style="mix-blend-mode:multiply"><text x="12" y="597" font-size="318" font-family="Liberation Sans, sans-serif" fill="#e6e9fd" textLength="1887" lengthAdjust="spacingAndGlyphs">TEKDATA.RU</text></svg>

<!-- annotation arrow -->
<svg width="1920" height="1040" viewBox="0 0 1920 1040">
<path d="M950 556 1157 763" stroke="#e73a2f" stroke-width="3.600" fill="none"/>
<path d="M937.300 544 966.700 554 947.300 572.700z" fill="#e73a2f"/>
<text x="1157.500" y="812" font-size="63" font-family="Liberation Sans, sans-serif" fill="#e73a2f" stroke="#fff" stroke-width=".7">3</text>
</svg>
</div></body></html>
